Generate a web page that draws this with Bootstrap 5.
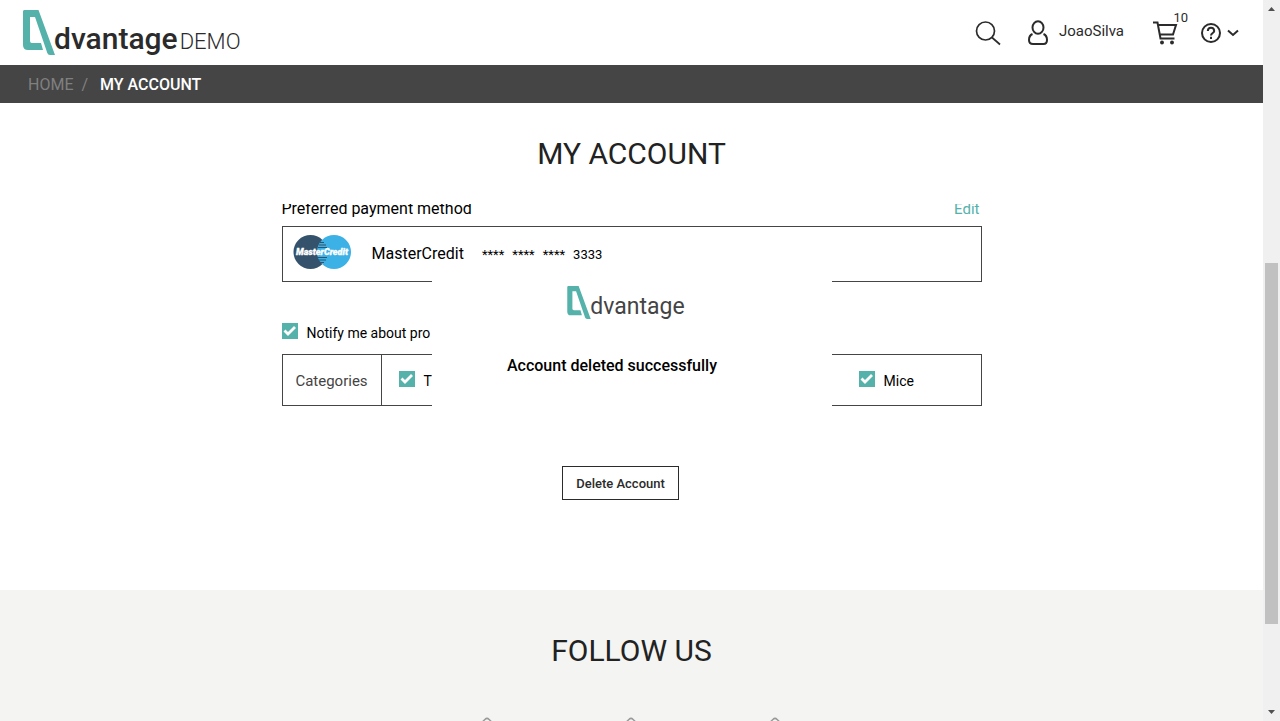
<!DOCTYPE html>
<html lang="en">
<head>
<meta charset="utf-8">
<meta name="viewport" content="width=device-width, initial-scale=1">
<title>My Account - Advantage Demo</title>
<link href="https://cdn.jsdelivr.net/npm/bootstrap@5.3.0/dist/css/bootstrap.min.css" rel="stylesheet">
<style>
  :root { --teal: #54b2ab; --ink: #2b2b2b; --bar: #454545; }
  body { font-family: Roboto, "Liberation Sans", sans-serif; font-size: 14px; line-height: 20px; color: #000; background: #fff; }
  a { color: inherit; text-decoration: none; }
  .topbar { height: 65px; padding: 0 24px 0 23px; color: var(--ink); }
  .brand-mark { margin-top: 10px; }
  .brand-word { font-size: 30px; line-height: 36px; font-weight: 500; margin-left: -1px; padding-top: 21px; }
  .brand-demo { font-size: 22px; line-height: 28px; font-weight: 300; padding-top: 28px; margin-left: 2px; }
  .tool-user { font-size: 15px; margin-left: 22px; }
  .cart-link { width: 36px; height: 36px; margin-left: 28px; padding: 6px 0 0; }
  .cart-count { position: absolute; top: -5px; right: 0; font-size: 13px; line-height: 16px; }
  .help-link { margin-left: 12px; }
  .crumbs { height: 38px; padding: 2px 28px 0; background: var(--bar); font-size: 16px; color: #fff; font-weight: 500; }
  .crumbs a { color: #808080; font-weight: 400; }
  .crumbs .breadcrumb-item + .breadcrumb-item::before { font-weight: 400; padding-right: 12px; color: #808080; }
  .page-title { font-size: 30px; line-height: 36px; font-weight: 400; color: #222; }
  .main-title { padding-top: 33px; margin-bottom: 32px; }
  .account { width: 700px; max-width: 100%; }
  .scroller { overflow: hidden; height: 386px; }
  .pane-head { font-size: 16px; line-height: 20px; margin-top: -5px; }
  .pane-head a { color: var(--teal); font-size: 15px; padding-right: 2px; }
  .outlined { border: 1px solid var(--bar); }
  .pay-row { height: 56px; padding: 0 10px; margin-top: 7px; }
  .pay-name { font-size: 16px; margin-left: 20px; }
  .pay-num { font-size: 13px; margin-left: 18px; padding-top: 2px; }
  .pay-num span { margin-right: 8px; }
  .notify { margin-top: 40px; height: 22px; }
  .cats { height: 52px; margin-top: 10px; }
  .cat-head { width: 99px; padding-top: 1px; border-right: 1px solid var(--bar); color: #444; font-size: 15px; }
  .tick { width: 16px; height: 16px; margin: 0 9px 4px 0; padding: 0; border-radius: 0 !important; flex: none; }
  .tick:checked { border-color: var(--teal); background-color: var(--teal); background-size: 16px;
    background-image: url("data:image/svg+xml,%3Csvg xmlns='http://www.w3.org/2000/svg' viewBox='0 0 16 16'%3E%3Cpath fill='none' stroke='%23fff' stroke-width='2.8' d='M2.500 7.500l3.500 3.500L13 4'/%3E%3C/svg%3E"); }
  .cat { width: 139px; flex: none; padding: 1px 0 0 17px; }
  .cat-wide { width: 460px; }
  .btn-delete { width: 117px; height: 34px; margin-top: 60px; border: 1px solid var(--ink); border-radius: 0; padding: 1px 0 0; font-size: 13px; font-weight: 500; color: var(--ink); }
  .delete-row { padding-right: 22px; }
  .notice { position: absolute; top: 77px; left: 50%; margin-left: -200px; width: 400px; height: 150px; background: #fff; padding-top: 5px; }
  .notice-logo { padding-right: 11px; }
  .notice-word { font-size: 23px; line-height: 30px; color: #444; padding-top: 6px; margin-left: -1px; }
  .notice-text { font-size: 16px; font-weight: 500; padding-right: 39px; margin: 34px 0 0; }
  .follow { background: #f4f4f2; padding-top: 43px; }
  .socials { gap: 80px; margin-top: 46px; padding-right: 2px; }
  .sidebar-track { width: 17px; background: #f0f0f0; }
  .sidebar-thumb { width: 13px; background: #c1c1c1; flex: 361 0 0; }
  .track-above { flex: 246 0 0; }
  .track-below { flex: 80 0 0; }
</style>
</head>
<body>
<svg class="d-none">
  <symbol id="mark-a" viewBox="0 0 32 45"><path fill="#54b2ab" d="M1 0H15.500L32 45H27Q25 45 24.300 43L12 7H7V31Q7 33 9 33H18L20 40H5Q0 40 0 35V1Z"/></symbol>
  <symbol id="diamond" viewBox="0 0 64 64"><rect x="11" y="11" width="42" height="42" rx="3" transform="rotate(45 32 32)" fill="none" stroke="#999" stroke-width="1.500"/></symbol>
</svg>
<div class="d-flex vh-100 overflow-hidden">
  <div class="flex-grow-1 d-flex flex-column overflow-hidden">
    <header class="topbar d-flex justify-content-between flex-shrink-0">
      <a href="#" class="d-flex align-items-start">
        <svg width="32" height="45" class="brand-mark flex-shrink-0"><use href="#mark-a"/></svg>
        <span class="brand-word">dvantage</span><span class="brand-demo">DEMO</span>
      </a>
      <nav class="d-flex align-items-center" aria-label="Tools">
        <a href="#" aria-label="Search"><svg width="26" height="26" viewBox="0 0 26 26" fill="none" stroke="#2b2b2b" stroke-width="1.700" class="d-block"><circle cx="10.500" cy="11" r="9"/><path d="M17 17.500l8 7"/></svg></a>
        <a href="#" class="d-flex align-items-center tool-user"><svg width="24" height="26" viewBox="0 0 24 26" fill="none" stroke="#2b2b2b" stroke-width="2" class="me-2 ms-1"><ellipse cx="11" cy="7.500" rx="5.500" ry="6.300"/><path d="M5.500 14Q2 15.500 2 20Q2 24 6 24H16.500Q20 24 20 20Q20 15.500 16.500 14"/></svg><span class="pb-1">JoaoSilva</span></a>
        <a href="#" class="cart-link position-relative" aria-label="Cart"><svg width="26" height="24" viewBox="0 0 26 24" fill="none" stroke="#2b2b2b" stroke-width="2" class="d-block"><path d="M1 1.500H5.500L8.500 17.500H22.500M6 4H24L21 13.500H8"/><circle cx="10" cy="21.500" r="1.200" fill="#2b2b2b" stroke-width="1.500"/><circle cx="20" cy="21.500" r="1.200" fill="#2b2b2b" stroke-width="1.500"/></svg><span class="cart-count">10</span></a>
        <a href="#" class="d-flex align-items-center help-link" aria-label="Help"><svg width="39" height="22" viewBox="0 0 39 22" fill="none" stroke="#2b2b2b" stroke-width="2"><circle cx="11" cy="11" r="9"/><path d="M7.800 9Q8 5.800 11 5.800T14.200 9C14.200 11 11 11 11 13.500M11 14.800V17M28 8.500L33 13L38 8.500"/></svg></a>
      </nav>
    </header>
    <nav class="crumbs d-flex align-items-center flex-shrink-0" aria-label="Breadcrumb">
      <ol class="breadcrumb mb-0">
        <li class="breadcrumb-item"><a href="#">HOME</a></li>
        <li class="breadcrumb-item">MY ACCOUNT</li>
      </ol>
    </nav>
    <main class="flex-shrink-0">
      <h1 class="page-title main-title text-center">MY ACCOUNT</h1>
      <div class="position-relative">
        <div class="scroller">
          <div class="account mx-auto">
            <div class="pane-head d-flex justify-content-between"><span>Preferred payment method</span><a href="#">Edit</a></div>
            <div class="outlined pay-row d-flex align-items-center">
              <svg width="59" height="36" viewBox="0 0 59 36" role="img" aria-label="MasterCredit" class="mb-1 flex-shrink-0"><circle cx="17.500" cy="18" r="17" fill="#34526b"/><circle cx="41" cy="18" r="17" fill="#3bb1e6"/><path d="M27 8.500h4M26 11h7M25 13.500h9M25 23.500h9M26 26h7M27 28.500h4" stroke="#34526b" stroke-width="1.200"/><text x="29" y="21" text-anchor="middle" fill="#fff" stroke="#fff" stroke-width=".3" font-family="Roboto, sans-serif" font-weight="900" font-style="italic" font-size="9">MasterCredit</text></svg>
              <span class="pay-name">MasterCredit</span>
              <div class="pay-num d-flex"><span>****</span><span>****</span><span>****</span><span>3333</span></div>
            </div>
            <label class="notify d-flex align-items-center"><input type="checkbox" class="form-check-input tick" checked><span>Notify me about pro</span></label>
            <div class="outlined cats d-flex align-items-stretch">
              <div class="cat-head d-flex align-items-center justify-content-center flex-shrink-0">Categories</div>
              <label class="cat cat-wide d-flex align-items-center"><input type="checkbox" class="form-check-input tick" checked>T</label>
              <label class="cat d-flex align-items-center"><input type="checkbox" class="form-check-input tick" checked>Mice</label>
            </div>
            <div class="text-center delete-row"><button type="button" class="btn btn-delete">Delete Account</button></div>
          </div>
        </div>
        <div class="notice" role="status">
          <div class="notice-logo d-flex justify-content-center align-items-start">
            <svg width="24" height="33"><use href="#mark-a"/></svg>
            <span class="notice-word">dvantage</span>
          </div>
          <p class="notice-text text-center">Account deleted successfully</p>
        </div>
      </div>
    </main>
    <footer class="follow flex-grow-1 text-center">
      <h2 class="page-title mb-0">FOLLOW US</h2>
      <div class="socials d-flex justify-content-center">
        <a href="#" aria-label="Facebook"><svg width="64" height="64" class="d-block"><use href="#diamond"/></svg></a>
        <a href="#" aria-label="Twitter"><svg width="64" height="64" class="d-block"><use href="#diamond"/></svg></a>
        <a href="#" aria-label="LinkedIn"><svg width="64" height="64" class="d-block"><use href="#diamond"/></svg></a>
      </div>
    </footer>
  </div>
  <div class="sidebar-track d-flex flex-column align-items-center flex-shrink-0" aria-hidden="true">
    <svg width="17" height="17" viewBox="0 0 17 17" class="flex-shrink-0"><path fill="#505050" d="M5 11L8.500 7L12 11Z"/></svg>
    <div class="track-above"></div><div class="sidebar-thumb"></div><div class="track-below"></div>
    <svg width="17" height="17" viewBox="0 0 17 17" class="flex-shrink-0"><path fill="#505050" d="M5 6H12L8.500 10Z"/></svg>
  </div>
</div>
<script src="https://cdn.jsdelivr.net/npm/bootstrap@5.3.0/dist/js/bootstrap.bundle.min.js"></script>
</body>
</html>
